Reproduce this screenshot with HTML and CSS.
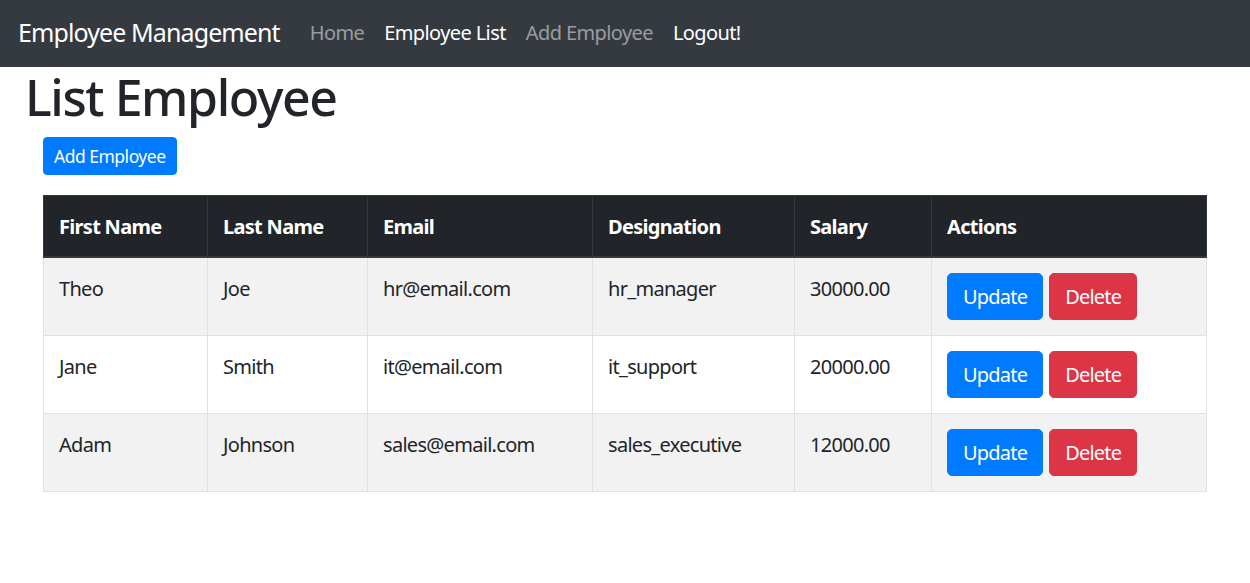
FILE: index.html
```html
<!DOCTYPE html>
<html lang="en">
<head>
<meta charset="utf-8">
<title>Employee Management</title>
<link rel="stylesheet" href="styles.css">
</head>
<body>
<nav class="navbar">
  <a class="brand" href="#">Employee Management</a>
  <ul class="nav">
    <li><a class="nav-link muted" href="#">Home</a></li>
    <li><a class="nav-link" href="#">Employee List</a></li>
    <li><a class="nav-link muted" href="#">Add Employee</a></li>
    <li><a class="nav-link" href="#">Logout!</a></li>
  </ul>
</nav>
<main class="page">
  <h1 class="title">List Employee</h1>
  <div class="content">
    <div class="toolbar"><button class="btn btn-primary btn-sm">Add Employee</button></div>
    <table class="table">
      <thead>
        <tr>
          <th class="c1">First Name</th>
          <th class="c2">Last Name</th>
          <th class="c3">Email</th>
          <th class="c4">Designation</th>
          <th class="c5">Salary</th>
          <th class="c6">Actions</th>
        </tr>
      </thead>
      <tbody>
        <tr>
          <td>Theo</td><td>Joe</td><td>hr@email.com</td><td>hr_manager</td><td>30000.00</td>
          <td class="actions"><button class="btn btn-primary">Update</button><button class="btn btn-danger">Delete</button></td>
        </tr>
        <tr>
          <td>Jane</td><td>Smith</td><td>it@email.com</td><td>it_support</td><td>20000.00</td>
          <td class="actions"><button class="btn btn-primary">Update</button><button class="btn btn-danger">Delete</button></td>
        </tr>
        <tr>
          <td>Adam</td><td>Johnson</td><td>sales@email.com</td><td>sales_executive</td><td>12000.00</td>
          <td class="actions"><button class="btn btn-primary">Update</button><button class="btn btn-danger">Delete</button></td>
        </tr>
      </tbody>
    </table>
  </div>
</main>
</body>
</html>
```
FILE: styles.css
```css
* { box-sizing: border-box; }
html, body { margin: 0; padding: 0; }
body {
  font-family: "Segoe UI", "Noto Sans", "Open Sans", sans-serif;
  font-size: 20px;
  line-height: 1.5;
  color: #212529;
  background: #fff;
}
.navbar {
  height: 67px;
  background: #343a40;
  display: flex;
  align-items: center;
  padding: 0 20px 1px 18px;
}
.brand {
  color: #fff;
  text-decoration: none;
  font-size: 25px;
  margin-right: 20px;
  letter-spacing: -0.9px;
}
.nav { list-style: none; margin: 0; padding: 0; display: flex; }
.nav-link {
  display: block;
  padding: 0 10px;
  color: #fff;
  text-decoration: none;
  font-size: 20px;
  letter-spacing: -0.6px;
}
.nav-link.muted { color: rgba(255,255,255,.5); }
.page { padding: 0 25px; }
.title {
  margin: 0 0 10px 0;
  font-size: 50px;
  font-weight: 500;
  line-height: 1.2;
  letter-spacing: -1.4px;
}
.content { padding: 0 18px; }
.toolbar { margin-bottom: 20px; }
.btn {
  display: inline-block;
  font-family: inherit;
  font-size: 20px;
  line-height: 30px;
  padding: 7.5px 15px;
  border: 1px solid transparent;
  border-radius: 5px;
  color: #fff;
  cursor: pointer;
  letter-spacing: -0.8px;
}
.btn-sm { font-size: 17.5px; line-height: 26px; padding: 5px 10px; border-radius: 4px; letter-spacing: -0.5px; }
.btn-primary { background: #007bff; border-color: #007bff; }
.btn-danger { background: #dc3545; border-color: #dc3545; }
.table {
  width: 100%;
  border-collapse: collapse;
  border: 1px solid #dee2e6;
}
.table th, .table td {
  text-align: left;
  vertical-align: top;
  padding: 16px 15px 14px;
  border: 1px solid #dee2e6;
  letter-spacing: -0.7px;
}
.table td.actions { padding: 15px 15px; }
.table thead th {
  background: #212529;
  color: #fff;
  font-weight: 700;
  border-color: #32383e;
  border-bottom: 2px solid #32383e;
}
.table tbody tr:nth-child(odd) { background: #f2f2f2; }
.c1 { width: 164px; }
.c2 { width: 160px; }
.c3 { width: 225px; }
.c4 { width: 202px; }
.c5 { width: 137px; }
.actions .btn + .btn { margin-left: 6px; }
```
